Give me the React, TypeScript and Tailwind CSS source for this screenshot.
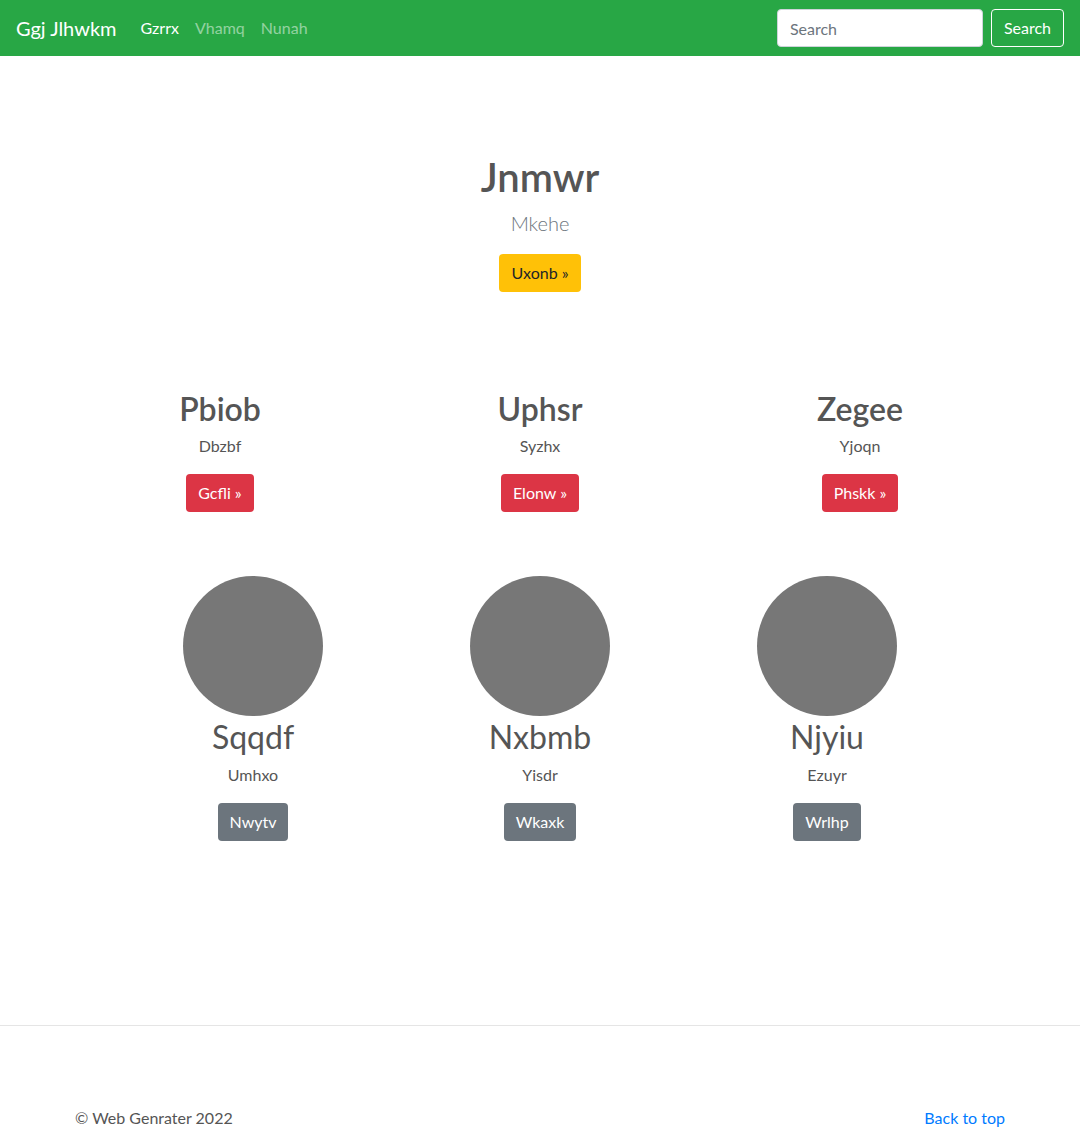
import React from "react";

const font = { fontFamily: '"Segoe UI", Lato, "Noto Sans", "Liberation Sans", sans-serif' };

function Feature({ title, sub, btn }: { title: string; sub: string; btn: string }) {
  return (
    <div className="flex flex-col items-center text-center">
      <h2 className="text-[32px] leading-[38px] font-semibold text-[#555] mb-[6px]">{title}</h2>
      <p className="text-[16px] leading-6 text-[#555] mb-4">{sub}</p>
      <button className="bg-[#dc3545] text-white text-[16px] leading-6 px-3 py-[7px] rounded">{btn} »</button>
    </div>
  );
}

function Person({ title, sub, btn }: { title: string; sub: string; btn: string }) {
  return (
    <div className="flex flex-col items-center text-center">
      <div className="w-[140px] h-[140px] rounded-full bg-[#777]" />
      <h2 className="text-[32px] leading-[38px] font-normal text-[#555] mt-[2px] mb-[7px]">{title}</h2>
      <p className="text-[16px] leading-6 text-[#555] mb-4">{sub}</p>
      <button className="bg-[#6c757d] text-white text-[16px] leading-6 px-3 py-[7px] rounded">{btn}</button>
    </div>
  );
}

export default function App() {
  return (
    <div style={font} className="bg-white min-h-[1130px] text-[#555]">
      <nav className="h-14 bg-[#28a745] flex items-center px-4">
        <span className="text-white text-[20px] leading-[30px] mr-4">Ggj Jlhwkm</span>
        <div className="flex text-[16px]">
          <span className="px-2 text-white">Gzrrx</span>
          <span className="px-2 text-white/50">Vhamq</span>
          <span className="px-2 text-white/50">Nunah</span>
        </div>
        <div className="ml-auto flex items-center">
          <input
            placeholder="Search"
            className="w-[206px] h-[38px] rounded border border-[#ced4da] bg-white px-3 text-[16px] text-[#495057] placeholder:text-[#6c757d] outline-none mr-2"
          />
          <button className="h-[38px] px-3 rounded border border-white text-white text-[16px]">Search</button>
        </div>
      </nav>

      <section className="pt-[97px] flex flex-col items-center text-center">
        <h1 className="text-[40px] leading-[48px] font-semibold text-[#555] mb-[7px]">Jnmwr</h1>
        <p className="text-[20px] leading-[30px] font-light text-[#6c757d] mb-4">Mkehe</p>
        <button className="bg-[#ffc107] text-[#212529] text-[16px] leading-6 px-3 py-[7px] rounded">Uxonb »</button>
      </section>

      <section className="mt-[98px] w-[960px] mx-auto grid grid-cols-3">
        <Feature title="Pbiob" sub="Dbzbf" btn="Gcfli" />
        <Feature title="Uphsr" sub="Syzhx" btn="Elonw" />
        <Feature title="Zegee" sub="Yjoqn" btn="Phskk" />
      </section>

      <section className="mt-16 w-[861px] mx-auto grid grid-cols-3">
        <Person title="Sqqdf" sub="Umhxo" btn="Nwytv" />
        <Person title="Nxbmb" sub="Yisdr" btn="Wkaxk" />
        <Person title="Njyiu" sub="Ezuyr" btn="Wrlhp" />
      </section>

      <hr className="mt-[184px] border-0 border-t border-[#e5e5e5]" />

      <footer className="pt-[80px] pb-4 w-[960px] mx-auto px-[15px] flex justify-between text-[16px] leading-6">
        <span className="text-[#555]">© Web Genrater 2022</span>
        <a className="text-[#007bff]" href="#">Back to top</a>
      </footer>
    </div>
  );
}
